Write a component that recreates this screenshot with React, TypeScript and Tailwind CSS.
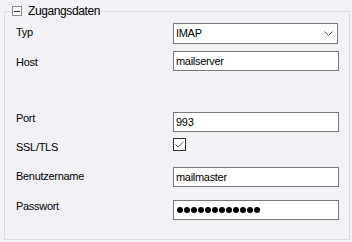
const Field = ({ children }: { children: React.ReactNode }) => (
  <div className="w-[166px] h-[20px] border border-[#7a7a7a] bg-white flex items-center pl-[2px] text-black">
    {children}
  </div>
);

const App = () => {
  return (
    <div className="w-[352px] h-[242px] bg-[#f1f1f6] pt-[3px] pl-[4px] font-['Liberation_Sans',Arial,sans-serif] text-[11px] leading-[13px] tracking-[-0.3px] text-black">
      <fieldset className="w-[346px] h-[237px] border border-[#dcdcdc] min-w-0">
        <legend className="ml-[5px] px-[2px]">
          <span className="flex items-center h-[16px] gap-[6px]">
            <span className="w-[10px] h-[10px] border border-[#8a8a8a] bg-white flex items-center justify-center">
              <span className="w-[6px] h-px bg-[#333]" />
            </span>
            <span className="text-[12px] tracking-[-0.4px]">Zugangsdaten</span>
          </span>
        </legend>

        <div className="flex flex-col pl-[11px]">
          {/* Typ */}
          <div className="flex items-start mt-[4px]">
            <div className="w-[157px] pt-[3px]">Typ</div>
            <div className="w-[165px] h-[21px] border border-[#7a7a7a] bg-white flex items-center justify-between pl-[2px] pr-[4px]">
              <span>IMAP</span>
              <svg width="9" height="5" viewBox="0 0 9 5" fill="none">
                <path d="M0.5 0.5 L4.5 4.5 L8.5 0.5" stroke="#5a5a5a" strokeWidth="1" />
              </svg>
            </div>
          </div>

          {/* Host */}
          <div className="flex items-start mt-[7px]">
            <div className="w-[157px] pt-[5px]">Host</div>
            <Field>mailserver</Field>
          </div>

          {/* Port */}
          <div className="flex items-start mt-[40px]">
            <div className="w-[157px] pt-[1px]">Port</div>
            <div className="mt-[1px]">
              <Field>993</Field>
            </div>
          </div>

          {/* SSL/TLS */}
          <div className="flex items-start mt-[6px]">
            <div className="w-[157px] pt-[3px]">SSL/TLS</div>
            <div className="w-[13px] h-[13px] border border-[#333] bg-white flex items-center justify-center">
              <svg width="9" height="7" viewBox="0 0 9 7" fill="none">
                <path d="M0.5 3.5 L3.2 6 L8.5 0.7" stroke="#555" strokeWidth="1" />
              </svg>
            </div>
          </div>

          {/* Benutzername */}
          <div className="flex items-start mt-[13px]">
            <div className="w-[157px] pt-[3px]">Benutzername</div>
            <Field>mailmaster</Field>
          </div>

          {/* Passwort */}
          <div className="flex items-start mt-[13px]">
            <div className="w-[157px]">Passwort</div>
            <Field>
              <span className="flex gap-[1px] pl-[1px]">
                {Array.from({ length: 12 }).map((_, i) => (
                  <span key={i} className="w-[6px] h-[6px] rounded-full bg-black" />
                ))}
              </span>
            </Field>
          </div>
        </div>
      </fieldset>
    </div>
  );
};

export default App;
